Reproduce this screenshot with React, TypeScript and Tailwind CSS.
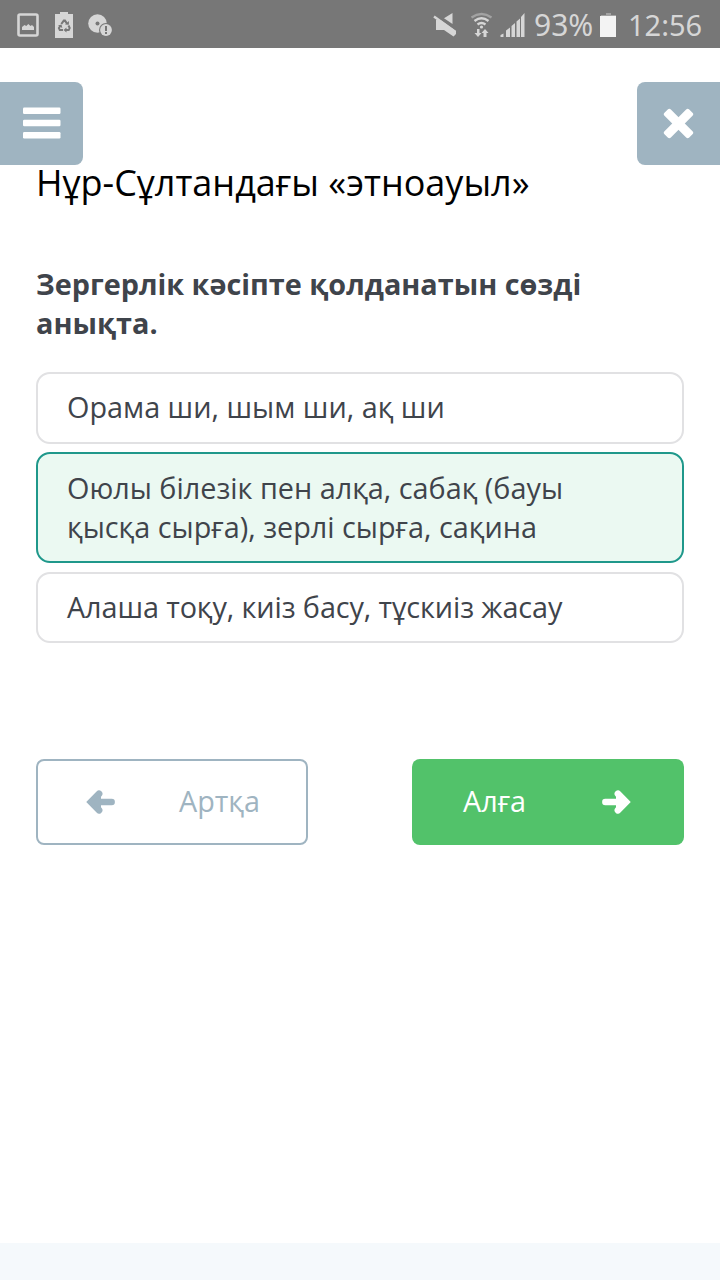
import clsx from 'clsx'

const options = [
  { lines: ['Орама ши, шым ши, ақ ши'], selected: false, box: 'h-[72px] mb-2 pb-1' },
  {
    lines: ['Оюлы білезік пен алқа, сабақ (бауы', 'қысқа сырға), зерлі сырға, сақина'],
    selected: true,
    box: 'h-[111px] mb-[9px] pb-px',
  },
  { lines: ['Алаша тоқу, киіз басу, тұскиіз жасау'], selected: false, box: 'h-[71px] pb-[3px] tracking-[-0.1px]' },
]

function NotificationIcons() {
  return (
    <svg width="114" height="48" viewBox="0 0 114 48" fill="#d6d6d6">
      {/* picture */}
      <rect x="18.5" y="14.5" width="19" height="21" rx="1.5" fill="none" stroke="#d6d6d6" strokeWidth="2.6" />
      <path d="M22 30v-3l2.5-2 1.8 1 2-2 2.2 2 1.5-1 2 2v3z" />
      {/* battery recycle */}
      <path d="M60 12h8v2h5v24H55V14h5z" />
      <g fill="none" stroke="#777" strokeWidth="2">
        <path d="M61.3 24l2.5-3.4H65l2 3" />
        <path d="M68.5 25.500l1.200 2.600-1 2h-3.400" />
        <path d="M63 30.100h-3.200l-.9-2 1.600-2.600" />
      </g>
      <path d="M65 24.600l3.800.2.200-3.700zM66.500 27.600v5l-3-2.500zM58 25.600l3.500-1.200.8 3.600z" fill="#777" />
      {/* disc with alert */}
      <circle cx="97.500" cy="23.500" r="9.300" />
      <circle cx="97.500" cy="23.500" r="2" fill="#777" />
      <circle cx="106" cy="30" r="7" fill="#777" />
      <circle cx="106" cy="30" r="5.900" />
      <path d="M105 26h2v5h-2zM105 32h2v2h-2z" fill="#777" />
    </svg>
  )
}

function SignalIcons() {
  return (
    <svg width="96" height="48" viewBox="0 0 96 48" fill="#d6d6d6" className="shrink-0">
      {/* muted speaker */}
      <path d="M20.500 13v11L12 18.300zM4 20h4.500L24 31v3l-2.500 2.500L12 30H4z" />
      <path d="M2 16.500l21.500 15.500" stroke="#d6d6d6" strokeWidth="2.400" />
      {/* wifi with traffic arrows */}
      <g fill="none" stroke="#d6d6d6" strokeWidth="2.300">
        <path d="M39.500 17.500q10-7 20 0" stroke="#a2a2a2" />
        <path d="M42.500 21q7-5.500 14 0" />
        <path d="M45.500 24.500q4-3 8 0" />
      </g>
      <circle cx="49.500" cy="27" r="1.600" />
      <path d="M45 29h2.500v4h2L46 37l-3.500-4H45zM51.500 37v-4h-2l3.500-4 3.500 4h-2v4z" />
      {/* cell bars */}
      <path d="M68.500 37v-2l3-1.500V37zM74 37v-6.500l4-3V37zM79.500 37V26l3.500-3v14zM84.500 37V21.500l3.500-3V37zM89 37V17l3.500-4v24z" />
    </svg>
  )
}

function StatusBar() {
  return (
    <div className="flex h-12 bg-[#777777] text-[29px] leading-[50px] text-[#d6d6d6]">
      <NotificationIcons />
      <div className="ml-auto flex w-[288px] font-['Noto_Sans',sans-serif]">
        <SignalIcons />
        <span className="ml-[6px] w-[63px] whitespace-nowrap text-[30px]">93%</span>
        <svg width="17" height="48" viewBox="0 0 17 48" className="ml-[3px] shrink-0">
          <path d="M6 13h5v2h5v3H1v-3h5z" fill="#a2a2a2" />
          <path d="M0 16h16v21H0z" fill="#f3f3f3" />
        </svg>
        <span className="ml-[11px] whitespace-nowrap">12:56</span>
      </div>
    </div>
  )
}

function ArrowIcon({ className }: { className?: string }) {
  return (
    <svg width="29" height="24" viewBox="0 0 29 24" fill="none" className={className}>
      <path d="M3.3 12H21" stroke="currentColor" strokeWidth="6.4" strokeLinecap="round" />
      <path d="M16 3.8L24 12l-8 8.2" stroke="currentColor" strokeWidth="6.8" strokeLinecap="round" />
      <path d="M14 5l9 7-9 7z" fill="currentColor" />
    </svg>
  )
}

export default function App() {
  return (
    <div className="flex h-[1280px] w-[720px] flex-col overflow-hidden bg-white font-['Open_Sans',sans-serif]">
      <StatusBar />

      <header className="mt-[34px] flex h-[83px] shrink-0 justify-between">
        <button className="w-[83px] rounded-r-lg bg-[#9fb4c1] pb-0.5 pl-[23px]" aria-label="Menu">
          <svg width="38" height="32" viewBox="0 0 38 32" fill="#fff">
            <rect y="0.5" width="37.5" height="6.5" rx="1.2" />
            <rect y="12.7" width="37.5" height="6.5" rx="1.2" />
            <rect y="25" width="37.5" height="6.5" rx="1.2" />
          </svg>
        </button>
        <button className="w-[83px] rounded-l-lg bg-[#9fb4c1] pl-[26px]" aria-label="Close">
          <svg width="31" height="31" viewBox="0 0 31 31" fill="#fff">
            <rect x="-2" y="11" width="35" height="9" rx="2.2" transform="rotate(45 15.5 15.5)" />
            <rect x="-2" y="11" width="35" height="9" rx="2.2" transform="rotate(-45 15.5 15.5)" />
          </svg>
        </button>
      </header>

      <main className="px-9">
        <h1 className="h-9 whitespace-nowrap text-[36px] leading-9 text-black">Нұр-Сұлтандағы «этноауыл»</h1>

        <p className="mt-[63px] text-[28.8px] font-bold leading-[39px] text-[#3f444b]">
          Зергерлік кәсіпте қолданатын сөзді
          <br />
          анықта.
        </p>

        <div className="mt-[30px]">
          {options.map(option => (
            <div
              key={option.lines[0]}
              className={clsx(
                'flex flex-col justify-center whitespace-nowrap rounded-[14px] border-2 px-[29px] text-[28.8px] leading-[39px] text-[#3f444b]',
                option.box,
                option.selected ? 'border-[#1f988b] bg-[#ebf9f2]' : 'border-[#e1e1e3] bg-white',
              )}
            >
              {option.lines.map(line => (
                <span key={line}>{line}</span>
              ))}
            </div>
          ))}
        </div>

        <div className="mt-[116px] flex justify-between text-[28.8px]">
          <button className="flex h-[86px] w-[272px] items-center justify-between rounded-lg border-2 border-[#9fb4c1] pl-12 pr-[46px] text-[#9fb4c1]">
            <ArrowIcon className="rotate-180" />
            <span className="pb-[3px]">Артқа</span>
          </button>
          <button className="flex h-[86px] w-[272px] items-center justify-between rounded-lg bg-[#52c26a] pl-[51px] pr-[53px] text-white">
            <span className="pb-[3px]">Алға</span>
            <ArrowIcon />
          </button>
        </div>
      </main>

      <footer className="mt-auto h-[37px] bg-[#f5f9fc]" />
    </div>
  )
}
